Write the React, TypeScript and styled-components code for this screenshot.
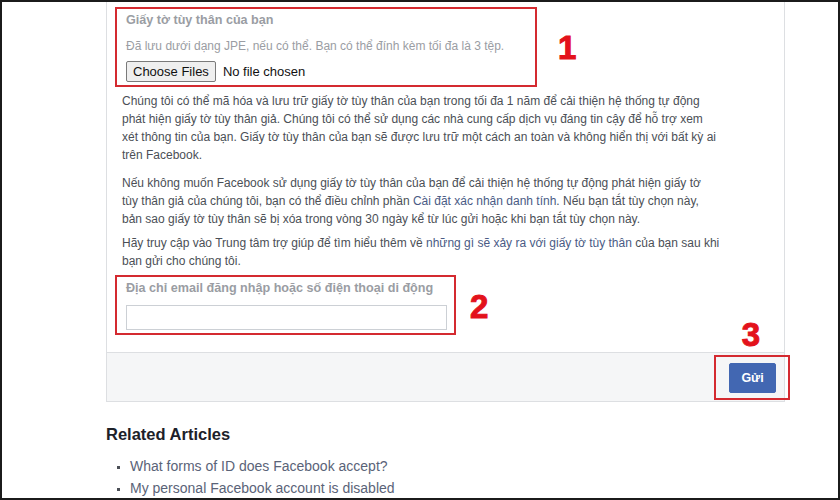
import React from "react";
import styled, { createGlobalStyle } from "styled-components";

const Global = createGlobalStyle`
  html, body { margin: 0; padding: 0; background: #ffffff; }
  body { font-family: "Liberation Sans", Arial, sans-serif; }
  * { box-sizing: border-box; }
`;

const Frame = styled.div`
  width: 840px;
  height: 500px;
  border: 2px solid #1b1b1b;
  overflow: hidden;
  padding-left: 104px;
  padding-right: 54px;
  background: #fff;
`;

const Card = styled.div`
  position: relative;
  width: 679px;
  border: 1px solid #dddfe2;
  border-top: none;
  background: #fff;
`;

const CardBody = styled.div`
  padding: 5px 15px 17px 15px;
`;

const Row = styled.div`
  display: flex;
  align-items: center;
`;

const Highlight = styled.div<{ $w: number; $mt?: number }>`
  width: ${(p) => p.$w}px;
  margin-left: -7px;
  margin-top: ${(p) => p.$mt ?? 0}px;
  border: 2px solid #d42a30;
  padding: 2px 9px 3px 9px;
`;

const Mark = styled.span<{ $ml: number; $mt?: number }>`
  margin-left: ${(p) => p.$ml}px;
  margin-top: ${(p) => p.$mt ?? 0}px;
  color: #e3121b;
  font-family: "Liberation Sans", Arial, sans-serif;
  font-weight: 700;
  font-size: 33px;
  line-height: 1;
  -webkit-text-stroke: 1px #e3121b;
`;

const FieldLabel = styled.div`
  color: #9a9da3;
  font-size: 12.6px;
  font-weight: 700;
  line-height: 18px;
`;

const Hint = styled.div`
  color: #9a9da3;
  font-size: 12px;
  line-height: 18px;
  margin-top: 8px;
`;

const FileRow = styled.div`
  display: flex;
  align-items: center;
  gap: 7px;
  margin-top: 6px;
  font-size: 13px;
  color: #111;
`;

const FileButton = styled.button`
  font-family: "Liberation Sans", Arial, sans-serif;
  font-size: 13px;
  height: 21px;
  padding: 0 6px;
  background: #efefef;
  color: #111;
  border: 1px solid #7a7a7a;
  border-radius: 2px;
`;

const Para = styled.p<{ $mt: number }>`
  margin: ${(p) => p.$mt}px 0 0 0;
  color: #4b4f56;
  font-size: 12px;
  line-height: 18px;
  white-space: nowrap;
`;

const Link = styled.span`
  color: #4a5b85;
`;

const InputBox = styled.div`
  margin-top: 8px;
  width: 321px;
  height: 25px;
  border: 1px solid #ccd0d5;
  background: #fff;
`;

const Mark3 = styled(Mark)`
  position: absolute;
  right: 24px;
  top: 316px;
`;

const Footer = styled.div`
  display: flex;
  justify-content: flex-end;
  align-items: center;
  height: 49px;
  background: #f5f6f7;
  border-top: 1px solid #dddfe2;
`;

const ButtonHighlight = styled.div`
  margin-right: -6px;
  margin-top: 1px;
  border: 2px solid #d42a30;
  padding: 6px 12px 5px 13px;
`;

const SendButton = styled.button`
  display: block;
  width: 47px;
  height: 30px;
  background: #4267b2;
  border: 1px solid #4267b2;
  border-radius: 2px;
  color: #fff;
  font-family: "Liberation Sans", Arial, sans-serif;
  font-weight: 700;
  font-size: 12.5px;
`;

const Related = styled.section`
  padding-top: 22px;
`;

const RelatedTitle = styled.h2`
  margin: 0;
  font-size: 16.5px;
  font-weight: 700;
  color: #1d2129;
  line-height: 20px;
`;

const List = styled.ul`
  margin: 11px 0 0 0;
  padding: 0 0 0 24px;
  list-style: square;
`;

const Item = styled.li`
  font-size: 14px;
  line-height: 22px;
  color: #5a6378;
  &::marker { font-size: 10px; color: #4b4f56; }
`;

export default function App() {
  return (
    <>
      <Global />
      <Frame>
        <Card>
          <CardBody>
            <Row>
              <Highlight $w={422}>
                <FieldLabel>Giấy tờ tùy thân của bạn</FieldLabel>
                <Hint>Đã lưu dưới dạng JPE, nếu có thể. Bạn có thể đính kèm tối đa là 3 tệp.</Hint>
                <FileRow>
                  <FileButton type="button">Choose Files</FileButton>
                  <span>No file chosen</span>
                </FileRow>
              </Highlight>
              <Mark $ml={21}>1</Mark>
            </Row>
            <Para $mt={5}>
              Chúng tôi có thể mã hóa và lưu trữ giấy tờ tùy thân của bạn trong tối đa 1 năm để cải thiện hệ thống tự động
              <br />
              phát hiện giấy tờ tùy thân giả. Chúng tôi có thể sử dụng các nhà cung cấp dịch vụ đáng tin cậy để hỗ trợ xem
              <br />
              xét thông tin của bạn. Giấy tờ tùy thân của bạn sẽ được lưu trữ một cách an toàn và không hiển thị với bất kỳ ai
              <br />
              trên Facebook.
            </Para>
            <Para $mt={10}>
              Nếu không muốn Facebook sử dụng giấy tờ tùy thân của bạn để cải thiện hệ thống tự động phát hiện giấy tờ
              <br />
              tùy thân giả của chúng tôi, bạn có thể điều chỉnh phần <Link>Cài đặt xác nhận danh tính</Link>. Nếu bạn tắt tùy chọn này,
              <br />
              bản sao giấy tờ tùy thân sẽ bị xóa trong vòng 30 ngày kể từ lúc gửi hoặc khi bạn tắt tùy chọn này.
            </Para>
            <Para $mt={6}>
              Hãy truy cập vào Trung tâm trợ giúp để tìm hiểu thêm về <Link>những gì sẽ xảy ra với giấy tờ tùy thân</Link> của bạn sau khi
              <br />
              bạn gửi cho chúng tôi.
            </Para>
            <Row>
              <Highlight $w={341} $mt={5}>
                <FieldLabel>Địa chỉ email đăng nhập hoặc số điện thoại di động</FieldLabel>
                <InputBox />
              </Highlight>
              <Mark $ml={14} $mt={8}>2</Mark>
            </Row>
          </CardBody>
          <Mark3>3</Mark3>
          <Footer>
            <ButtonHighlight>
              <SendButton type="button">Gửi</SendButton>
            </ButtonHighlight>
          </Footer>
        </Card>
        <Related>
          <RelatedTitle>Related Articles</RelatedTitle>
          <List>
            <Item>What forms of ID does Facebook accept?</Item>
            <Item>My personal Facebook account is disabled</Item>
          </List>
        </Related>
      </Frame>
    </>
  );
}
